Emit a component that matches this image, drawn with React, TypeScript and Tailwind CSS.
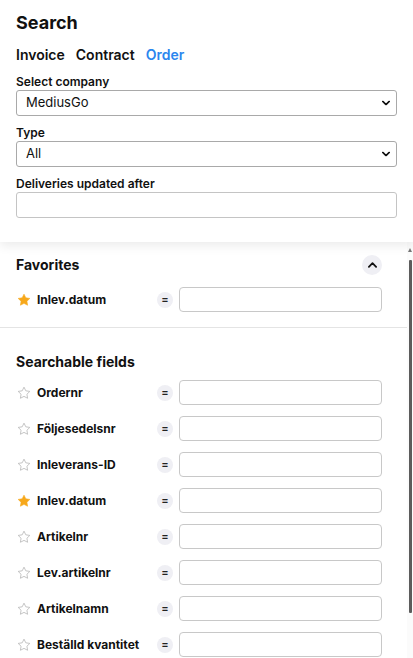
import { useState } from "react";

const font = { fontFamily: "Inter, 'Noto Sans', sans-serif" };

const StarIcon = ({ filled }: { filled: boolean }) => (
  <svg width="14" height="14" viewBox="0 0 24 24" className="shrink-0">
    <polygon
      points="12,2 15.09,8.26 22,9.27 17,14.14 18.18,21.02 12,17.77 5.82,21.02 7,14.14 2,9.27 8.91,8.26"
      fill={filled ? "#f7a81b" : "none"}
      stroke={filled ? "#f7a81b" : "#b8b8b8"}
      strokeWidth={filled ? 1 : 1.4}
      strokeLinejoin="round"
    />
  </svg>
);

const ChevronDown = () => (
  <svg width="8" height="5" viewBox="0 0 10 6" className="pointer-events-none absolute right-[7px] top-1/2 -translate-y-1/2">
    <path d="M1 1l4 4 4-4" fill="none" stroke="#111" strokeWidth="2" strokeLinecap="round" strokeLinejoin="round" />
  </svg>
);

const SelectBox = ({ value }: { value: string }) => (
  <div className="relative">
    <select
      defaultValue={value}
      className="block h-[26px] w-full appearance-none rounded-[3px] border border-[#a9a9a9] bg-white pl-[9px] text-[13px] text-[#111] outline-none"
    >
      <option>{value}</option>
    </select>
    <ChevronDown />
  </div>
);

const FieldRow = ({ label, fav }: { label: string; fav: boolean }) => (
  <div className="flex items-center pl-[17px] pr-[25px]">
    <StarIcon filled={fav} />
    <span className="ml-[6px] w-[121px] text-[12px] font-bold text-[#111]">{label}</span>
    <span className="flex h-[16px] w-[16px] shrink-0 items-center justify-center rounded-full bg-[#efeff4] text-[11px] font-semibold leading-none text-[#222]">
      =
    </span>
    <input className="ml-[6px] block h-[25px] w-[203px] rounded-[4px] border border-[#c8c8c8] bg-white outline-none" />
  </div>
);

const fields: [string, boolean][] = [
  ["Ordernr", false],
  ["Följesedelsnr", false],
  ["Inleverans-ID", false],
  ["Inlev.datum", true],
  ["Artikelnr", false],
  ["Lev.artikelnr", false],
  ["Artikelnamn", false],
  ["Beställd kvantitet", false],
];

export default function App() {
  const [tab] = useState("Order");

  return (
    <div className="flex h-[658px] w-[413px] flex-col overflow-hidden bg-white text-[#111]" style={font}>
      {/* Header */}
      <div className="relative z-10 bg-white px-4 pb-[24px] pt-[9px] shadow-[0_4px_10px_rgba(0,0,0,0.08)]">
        <h1 className="text-[18px] font-bold leading-[28px]">Search</h1>
        <div className="mt-[8px] flex gap-[11px] text-[14px] font-semibold leading-[20px]">
          {["Invoice", "Contract", "Order"].map((t) => (
            <span key={t} className={t === tab ? "text-[#2b86ee]" : "text-[#111]"}>
              {t}
            </span>
          ))}
        </div>
        <label className="mt-[9px] block text-[12px] font-semibold leading-[16px]">Select company</label>
        <SelectBox value="MediusGo" />
        <label className="mt-[9px] block text-[12px] font-semibold leading-[16px]">Type</label>
        <SelectBox value="All" />
        <label className="mt-[9px] block text-[12px] font-semibold leading-[16px]">Deliveries updated after</label>
        <input className="block h-[26px] w-full rounded-[3px] border border-[#c4c4c4] bg-white outline-none" />
      </div>

      {/* Scroll area */}
      <div className="flex min-h-0 flex-1">
        <div className="min-w-0 flex-1 overflow-hidden">
          <div className="flex items-center justify-between pl-4 pr-[25px] pt-[13px]">
            <h2 className="text-[14px] font-bold leading-[20px]">Favorites</h2>
            <button className="flex h-[20px] w-[20px] items-center justify-center rounded-full bg-[#efeff4]">
              <svg width="9" height="6" viewBox="0 0 10 6">
                <path d="M1 5l4-4 4 4" fill="none" stroke="#111" strokeWidth="2" strokeLinecap="round" strokeLinejoin="round" />
              </svg>
            </button>
          </div>
          <div className="mt-[12px]">
            <FieldRow label="Inlev.datum" fav />
          </div>
          <div className="mt-[15px] border-t border-[#e4e4e4]" />
          <h2 className="mt-[24px] pl-4 text-[14px] font-bold leading-[20px]">Searchable fields</h2>
          <div className="mt-[8px] flex flex-col gap-[11px]">
            {fields.map(([l, f]) => (
              <FieldRow key={l} label={l} fav={f} />
            ))}
          </div>
        </div>

        {/* Scrollbar */}
        <div className="flex w-[6px] flex-col items-end bg-[#fbfbfb] pr-[1px]">
          <div className="mt-[6px] h-0 w-0 border-x-[2.5px] border-b-[4px] border-x-transparent border-b-[#777]" />
          <div className="mt-[8px] h-[353px] w-[3px] rounded-[1px] bg-[#5c5c5c]" />
        </div>
      </div>
    </div>
  );
}
